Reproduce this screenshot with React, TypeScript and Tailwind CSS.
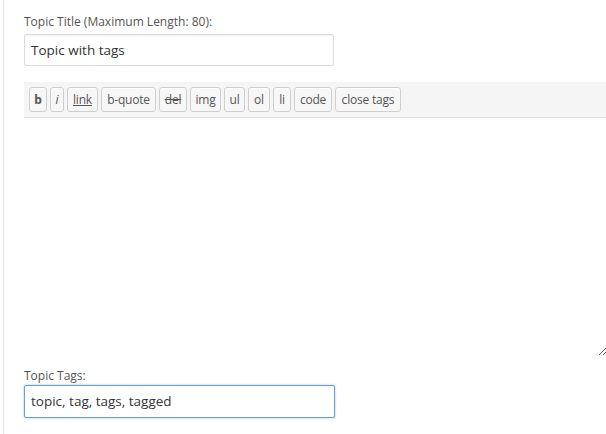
import React from "react";

const font = { fontFamily: '"Open Sans", "Segoe UI", sans-serif' };

function Btn({ children, w, className = "" }: { children: React.ReactNode; w: string; className?: string }) {
  return (
    <div
      className={`${w} shrink-0 min-w-0 whitespace-nowrap h-[25px] flex items-center justify-center border border-[#cfcfcf] rounded-[3px] bg-[#f7f7f7] text-[12px] tracking-[-0.2px] text-[#555] shadow-[inset_0_1px_0_#fff] ${className}`}
    >
      {children}
    </div>
  );
}

export default function App() {
  return (
    <div className="w-[606px] h-[434px] bg-white overflow-hidden" style={font}>
      <div className="ml-[3px] h-full border-l border-[#e6e6e6] pl-[20px] pt-[14px] flex flex-col">
        <label className="text-[12px] leading-[16px] text-[#555] h-[20px]">Topic Title (Maximum Length: 80):</label>
        <div className="w-[310px] h-[32px] border border-[#dcdcdc] rounded-[2px] shadow-[inset_0_1px_2px_rgba(0,0,0,0.07)] flex items-center pl-[6px] text-[13.5px] text-[#333]">
          Topic with tags
        </div>
        <div className="mt-[16px] h-[36px] bg-[#f5f5f5] border-b border-[#dedede] flex items-center gap-[3px] pl-[5px] -mr-[10px]">
          <Btn w="w-[18px]" className="font-bold">b</Btn>
          <Btn w="w-[14px]" className="italic">i</Btn>
          <Btn w="w-[31px]" className="underline">link</Btn>
          <Btn w="w-[55px]">b-quote</Btn>
          <Btn w="w-[28px]" className="line-through">del</Btn>
          <Btn w="w-[31px]">img</Btn>
          <Btn w="w-[21px]">ul</Btn>
          <Btn w="w-[22px]">ol</Btn>
          <Btn w="w-[18px]">li</Btn>
          <Btn w="w-[38px]">code</Btn>
          <Btn w="w-[66px]">close tags</Btn>
        </div>
        <textarea
          className="w-[583px] h-[238px] outline-none border-0 resize-y bg-white block"
          defaultValue=""
        />
        <label className="mt-[12px] text-[12px] leading-[16px] text-[#555] h-[17px]">Topic Tags:</label>
        <div className="w-[311px] h-[33px] border border-[#6a9fde] rounded-[2px] shadow-[0_0_2px_rgba(30,140,190,0.6)] flex items-center pl-[6px] text-[13.5px] text-[#333]">
          topic, tag, tags, tagged
        </div>
      </div>
    </div>
  );
}
